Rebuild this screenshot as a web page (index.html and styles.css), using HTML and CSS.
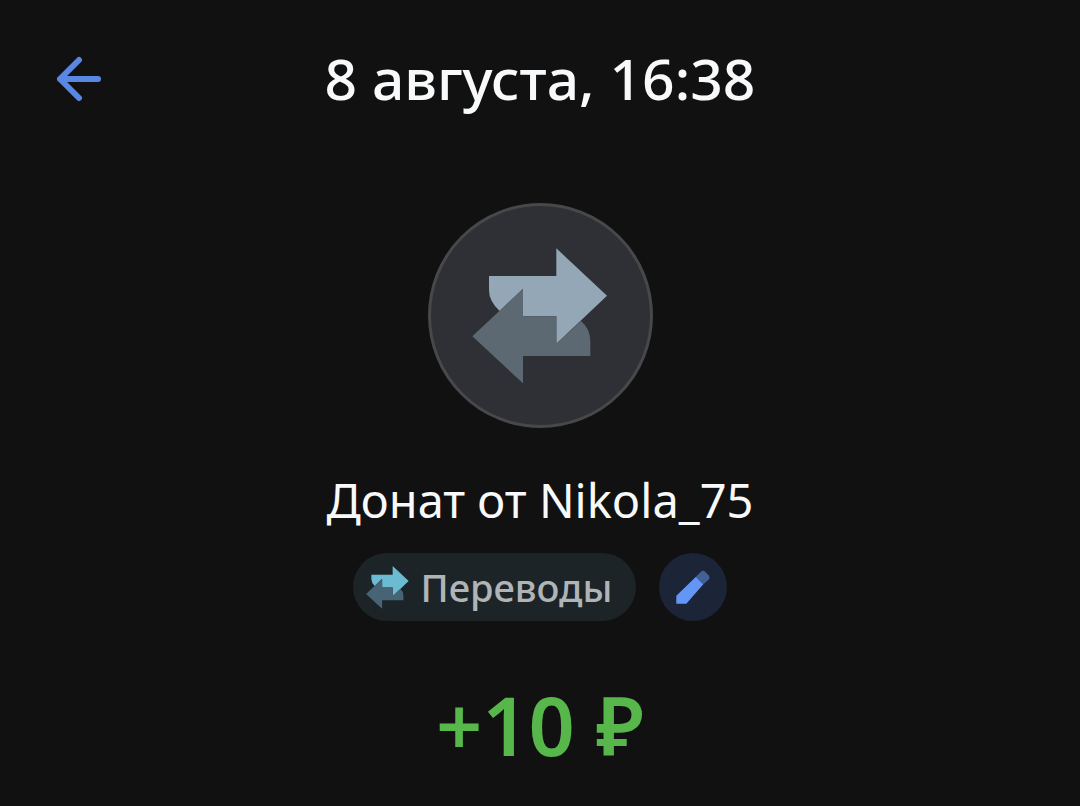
FILE: index.html
```html
<!DOCTYPE html>
<html lang="ru">

<head>
  <meta charset="UTF-8">
  <meta name="viewport" content="width=device-width, initial-scale=1.0">
  <title>8 августа, 16:38</title>
  <link rel="stylesheet" href="styles.css">
</head>

<body>
  <header class="header">
    <button type="button" class="btn-back" aria-label="Назад">
      <svg class="icon-back" viewBox="0 0 48 48" aria-hidden="true">
        <path d="M23 5 4 24l19 19M4 24h38" />
      </svg>
    </button>
    <h1 class="header-ttl">8 августа, 16:38</h1>
  </header>

  <main class="operation">
    <div class="avatar">
      <svg class="icon-transfer" viewBox="0 0 408 408" aria-hidden="true">
        <path class="arrow-right" d="M51 84H253V1L405 143 253 287V205H153V122L83 189Q51 160 51 126Z" />
        <path class="arrow-left" d="M153 122V205H253V287L327 219Q355 243 355 279V324H153V406L1 265Z" />
      </svg>
    </div>
    <p class="operation-name">Донат от Nikola_75</p>

    <div class="category">
      <a href="#" class="category-link">
        <svg class="icon-transfer icon-transfer-small" viewBox="0 0 408 408" aria-hidden="true">
          <path class="arrow-right" d="M51 84H253V1L405 143 253 287V205H153V122L83 189Q51 160 51 126Z" />
          <path class="arrow-left" d="M153 122V205H253V287L327 219Q355 243 355 279V324H153V406L1 265Z" />
        </svg>
        Переводы
      </a>
      <button type="button" class="btn-edit" aria-label="Изменить категорию">
        <svg class="icon-edit" viewBox="0 0 102 102" aria-hidden="true">
          <path class="pencil-body" d="M1 77 60 20 82 43 31 101H1Z" />
          <path class="pencil-end" d="M60 20 74 6Q81 -1 88 6L97 15Q104 23 97 30L82 43Z" />
        </svg>
      </button>
    </div>

    <p class="amount">+10 ₽</p>
  </main>
</body>

</html>
```

FILE: styles.css
```css
* {
  box-sizing: border-box;
}

body {
  min-height: 100vh;
  margin: 0;
  font-family: "Noto Sans", sans-serif;
  color: #f8f9fa;
  background: #111;
}

h1,
p {
  margin: 0;
}

button {
  padding: 0;
  border: none;
  cursor: pointer;
}

svg {
  display: block;
}

.header {
  display: grid;
  grid-template-columns: 48px 1fr 48px;
  align-items: center;
  padding: 38px 56px 0;
}

.btn-back {
  padding-top: 2px;
  background: none;
}

.icon-back {
  width: 48px;
  height: 48px;
  fill: none;
  stroke: #5b87e4;
  stroke-width: 6;
  stroke-linecap: round;
  stroke-linejoin: round;
}

.header-ttl {
  font-size: 57px;
  font-weight: 500;
  line-height: 80px;
  text-align: center;
}

.operation {
  display: flex;
  flex-direction: column;
  align-items: center;
  padding: 85px 24px 24px;
}

.avatar {
  display: flex;
  align-items: center;
  justify-content: center;
  width: 225px;
  height: 225px;
  border: 3px solid #47484a;
  border-radius: 50%;
  background: #2f3035;
}

.icon-transfer {
  width: 136px;
  height: 136px;
}

.arrow-right {
  fill: #94a7b7;
}

.arrow-left {
  fill: #5c6872;
}

.operation-name {
  margin-top: 40px;
  font-size: 47px;
  line-height: 64px;
}

.category {
  display: flex;
  gap: 23px;
  margin-top: 21px;
}

.category-link {
  display: flex;
  align-items: center;
  gap: 12px;
  height: 68px;
  padding: 0 24px 0 13px;
  border-radius: 34px;
  font-size: 38px;
  font-weight: 500;
  color: #b0b4b7;
  text-decoration: none;
  background: #1c2427;
}

.icon-transfer-small {
  width: 43px;
  height: 43px;
}

.icon-transfer-small .arrow-right {
  fill: #6bbbd3;
}

.icon-transfer-small .arrow-left {
  fill: #466474;
}

.btn-edit {
  display: flex;
  align-items: center;
  justify-content: center;
  width: 68px;
  height: 68px;
  border-radius: 50%;
  background: #1c2537;
}

.icon-edit {
  width: 34px;
  height: 34px;
}

.pencil-body {
  fill: #6496f5;
}

.pencil-end {
  fill: #436199;
}

.amount {
  margin-top: 48px;
  font-size: 81px;
  font-weight: 600;
  line-height: 112px;
  color: #57b74b;
}
```
